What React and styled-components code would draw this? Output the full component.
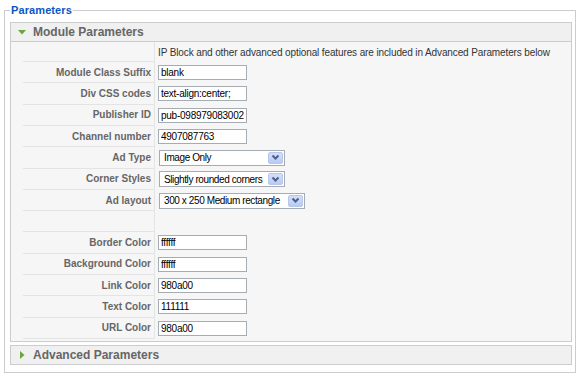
import React from 'react';
import styled, { createGlobalStyle } from 'styled-components';

const GlobalStyle = createGlobalStyle`
  body {
    margin: 0;
    background: #ffffff;
    font-family: "Liberation Sans", Arial, sans-serif;
  }
`;

const fields = [
  { label: 'Module Class Suffix', type: 'text', value: 'blank' },
  { label: 'Div CSS codes', type: 'text', value: 'text-align:center;' },
  { label: 'Publisher ID', type: 'text', value: 'pub-0989790830026' },
  { label: 'Channel number', type: 'text', value: '4907087763' },
  { label: 'Ad Type', type: 'select', value: 'Image Only', width: 126 },
  { label: 'Corner Styles', type: 'select', value: 'Slightly rounded corners', width: 126 },
  { label: 'Ad layout', type: 'select', value: '300 x 250 Medium rectangle', width: 146 },
  { label: '', type: 'empty' },
  { label: 'Border Color', type: 'text', value: 'ffffff' },
  { label: 'Background Color', type: 'text', value: 'ffffff' },
  { label: 'Link Color', type: 'text', value: '980a00' },
  { label: 'Text Color', type: 'text', value: '111111' },
  { label: 'URL Color', type: 'text', value: '980a00' },
];

const Arrow = ({ open }) => (
  <ArrowIcon width="8" height="8" viewBox="0 0 8 8">
    {open ? (
      <polygon points="0,2 8,2 4,6.5" fill="#6aa63c" />
    ) : (
      <polygon points="2,0 6.5,4 2,8" fill="#6aa63c" />
    )}
  </ArrowIcon>
);

const Chevron = () => (
  <svg width="9" height="7" viewBox="0 0 9 7">
    <polyline points="1.5,1.5 4.5,4.5 7.5,1.5" fill="none" stroke="#4d6185" strokeWidth="2" />
  </svg>
);

const Field = ({ field }) => {
  if (field.type === 'select') {
    return (
      <SelectBox $width={field.width}>
        <SelectText>{field.value}</SelectText>
        <DropButton>
          <Chevron />
        </DropButton>
      </SelectBox>
    );
  }
  if (field.type === 'text') {
    return <TextInput readOnly value={field.value} />;
  }
  return null;
};

const App = () => {
  return (
    <>
      <GlobalStyle />
      <Fieldset>
        <Legend>Parameters</Legend>

        <Panel>
          <PanelTitle $open>
            <Arrow open />
            <span>Module Parameters</span>
          </PanelTitle>
          <PanelContent>
            <Row $h={20}>
              <Key />
              <Value>
                <Note>IP Block and other advanced optional features are included in Advanced Parameters below</Note>
              </Value>
            </Row>
            {fields.map((field, i) => (
              <Row key={i} $h={field.type === 'empty' ? 21 : 21.33}>
                <Key>{field.label}</Key>
                <Value>
                  <Field field={field} />
                </Value>
              </Row>
            ))}
          </PanelContent>
        </Panel>

        <Panel>
          <PanelTitle>
            <Arrow />
            <span>Advanced Parameters</span>
          </PanelTitle>
        </Panel>
      </Fieldset>
    </>
  );
};

const Fieldset = styled.fieldset`
  margin: 3px 4px 0 4px;
  padding: 5px 3px 4px 5px;
  border: 1px solid #cccccc;
  min-width: 0;
`;

const Legend = styled.legend`
  padding: 0 1px;
  color: #0b55c4;
  font-size: 11px;
  font-weight: bold;
  line-height: 14px;
  letter-spacing: 0.1px;
`;

const Panel = styled.div`
  border: 1px solid #cccccc;
  margin-bottom: 3px;
  background: #f6f6f6;
`;

const PanelTitle = styled.h3`
  display: flex;
  align-items: center;
  margin: 0;
  height: 18px;
  padding: 0 0 0 7px;
  background: #f0f0f0;
  color: #666666;
  font-size: 12px;
  font-weight: bold;
  letter-spacing: 0;
  border-bottom: ${(p) => (p.$open ? '1px solid #cccccc' : 'none')};

  span {
    margin-left: 7px;
  }
`;

const ArrowIcon = styled.svg`
  flex: none;
  display: block;
`;

const PanelContent = styled.div`
  padding: 0 0 2px 12px;
  background: #f6f6f6;
`;

const Row = styled.div`
  display: flex;
  height: ${(p) => p.$h}px;
`;

const Key = styled.div`
  box-sizing: border-box;
  flex: none;
  width: 132px;
  padding-right: 3px;
  display: flex;
  align-items: center;
  justify-content: flex-end;
  border-right: 1px solid #e4e4e4;
  border-bottom: 1px solid #e4e4e4;
  color: #666666;
  font-size: 10px;
  font-weight: bold;
  white-space: nowrap;
`;

const Value = styled.div`
  display: flex;
  align-items: center;
  padding-left: 3px;
  min-width: 0;
`;

const Note = styled.span`
  font-size: 10px;
  letter-spacing: -0.12px;
  color: #333333;
  white-space: nowrap;
`;

const TextInput = styled.input`
  box-sizing: border-box;
  width: 89px;
  height: 15px;
  margin: 0;
  padding: 0 2px;
  border: 1px solid #a5acb2;
  background: #ffffff;
  font-family: "Liberation Sans", Arial, sans-serif;
  font-size: 10px;
  letter-spacing: -0.25px;
  color: #000000;
  outline: none;
`;

const SelectBox = styled.div`
  box-sizing: border-box;
  display: flex;
  align-items: center;
  width: ${(p) => p.$width}px;
  height: 16px;
  margin-left: 1px;
  padding: 0 1px 0 4px;
  border: 1px solid #a5acb2;
  background: #ffffff;
`;

const SelectText = styled.span`
  flex: 1;
  font-size: 10px;
  letter-spacing: -0.4px;
  color: #000000;
  white-space: nowrap;
  overflow: hidden;
`;

const DropButton = styled.div`
  box-sizing: border-box;
  flex: none;
  width: 15px;
  height: 12px;
  display: flex;
  align-items: center;
  justify-content: center;
  border: 1px solid #b7c6ea;
  border-radius: 2px;
  background: linear-gradient(#d3dffb, #b9caf3);
`;

export default App;
